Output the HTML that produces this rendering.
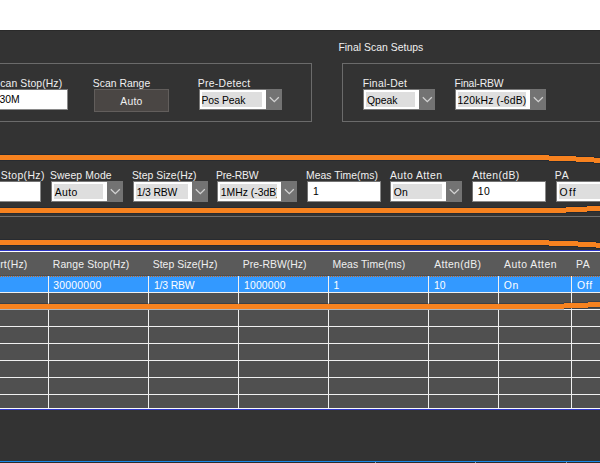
<!DOCTYPE html><html><head><meta charset="utf-8"><style>
html,body{margin:0;padding:0;width:600px;height:463px;overflow:hidden;background:#333333}
body{position:relative;font-family:"Liberation Sans",sans-serif;font-size:10.4px}
.t{position:absolute;white-space:nowrap;line-height:12px;height:12px}
.r{position:absolute}
</style></head><body>
<div class="r" style="left:0px;top:0px;width:600px;height:30px;background:#ffffff;"></div>
<div class="r" style="left:0px;top:30px;width:600px;height:1px;background:#2a2a2a;"></div>
<div class="r" style="left:-10px;top:63px;width:320px;height:57px;border:1px solid #6b6b6b"></div>
<div class="r" style="left:342px;top:63px;width:300px;height:57px;border:1px solid #6b6b6b"></div>
<div class="r" style="left:-10px;top:89px;width:76px;height:19px;background:#fff;border:1px solid #727272;border-right-color:#8a8a8a;border-bottom-color:#8a8a8a"></div>
<div class="r" style="left:94px;top:89px;width:73px;height:21px;background:#4a4644;border:1px solid #625e5c"></div>
<div class="r" style="left:199px;top:89px;width:81px;height:19px;background:#fff;border:1px solid #7a7a7a"></div>
<div class="r" style="left:202px;top:92px;width:60px;height:15px;background:#dedede;"></div>
<div class="r" style="left:266px;top:89px;width:16px;height:21px;background:#737373"><svg width="16" height="21" viewBox="0 0 16 21" style="position:absolute;left:0;top:0"><polyline points="3.8,8.2 8.3,12.7 12.8,8.2" fill="none" stroke="#d2d2d2" stroke-width="1.3"/></svg></div>
<div class="r" style="left:363px;top:89px;width:70px;height:19px;background:#fff;border:1px solid #7a7a7a"></div>
<div class="r" style="left:366px;top:92px;width:49px;height:15px;background:#dedede;"></div>
<div class="r" style="left:419px;top:89px;width:16px;height:21px;background:#737373"><svg width="16" height="21" viewBox="0 0 16 21" style="position:absolute;left:0;top:0"><polyline points="3.8,8.2 8.3,12.7 12.8,8.2" fill="none" stroke="#d2d2d2" stroke-width="1.3"/></svg></div>
<div class="r" style="left:455px;top:89px;width:89px;height:19px;background:#fff;border:1px solid #7a7a7a"></div>
<div class="r" style="left:458px;top:92px;width:68px;height:15px;background:#dedede;"></div>
<div class="r" style="left:530px;top:89px;width:16px;height:21px;background:#737373"><svg width="16" height="21" viewBox="0 0 16 21" style="position:absolute;left:0;top:0"><polyline points="3.8,8.2 8.3,12.7 12.8,8.2" fill="none" stroke="#d2d2d2" stroke-width="1.3"/></svg></div>
<div class="r" style="left:-30px;top:181px;width:69px;height:19px;background:#fff;border:1px solid #727272;border-right-color:#8a8a8a;border-bottom-color:#8a8a8a"></div>
<div class="r" style="left:51px;top:181px;width:70px;height:19px;background:#fff;border:1px solid #7a7a7a"></div>
<div class="r" style="left:54px;top:184px;width:49px;height:15px;background:#dedede;"></div>
<div class="r" style="left:107px;top:181px;width:16px;height:21px;background:#737373"><svg width="16" height="21" viewBox="0 0 16 21" style="position:absolute;left:0;top:0"><polyline points="3.8,8.2 8.3,12.7 12.8,8.2" fill="none" stroke="#d2d2d2" stroke-width="1.3"/></svg></div>
<div class="r" style="left:133px;top:181px;width:73px;height:19px;background:#fff;border:1px solid #7a7a7a"></div>
<div class="r" style="left:136px;top:184px;width:52px;height:15px;background:#dedede;"></div>
<div class="r" style="left:192px;top:181px;width:16px;height:21px;background:#737373"><svg width="16" height="21" viewBox="0 0 16 21" style="position:absolute;left:0;top:0"><polyline points="3.8,8.2 8.3,12.7 12.8,8.2" fill="none" stroke="#d2d2d2" stroke-width="1.3"/></svg></div>
<div class="r" style="left:217px;top:181px;width:78px;height:19px;background:#fff;border:1px solid #7a7a7a"></div>
<div class="r" style="left:220px;top:184px;width:57px;height:15px;background:#dedede;"></div>
<div class="r" style="left:281px;top:181px;width:16px;height:21px;background:#737373"><svg width="16" height="21" viewBox="0 0 16 21" style="position:absolute;left:0;top:0"><polyline points="3.8,8.2 8.3,12.7 12.8,8.2" fill="none" stroke="#d2d2d2" stroke-width="1.3"/></svg></div>
<div class="r" style="left:307px;top:181px;width:72px;height:19px;background:#fff;border:1px solid #727272;border-right-color:#8a8a8a;border-bottom-color:#8a8a8a"></div>
<div class="r" style="left:390px;top:181px;width:70px;height:19px;background:#fff;border:1px solid #7a7a7a"></div>
<div class="r" style="left:393px;top:184px;width:49px;height:15px;background:#dedede;"></div>
<div class="r" style="left:446px;top:181px;width:16px;height:21px;background:#737373"><svg width="16" height="21" viewBox="0 0 16 21" style="position:absolute;left:0;top:0"><polyline points="3.8,8.2 8.3,12.7 12.8,8.2" fill="none" stroke="#d2d2d2" stroke-width="1.3"/></svg></div>
<div class="r" style="left:472px;top:181px;width:72px;height:19px;background:#fff;border:1px solid #727272;border-right-color:#8a8a8a;border-bottom-color:#8a8a8a"></div>
<div class="r" style="left:556px;top:181px;width:88px;height:19px;background:#fff;border:1px solid #7a7a7a"></div>
<div class="r" style="left:559px;top:184px;width:67px;height:15px;background:#dedede;"></div>
<div class="r" style="left:630px;top:181px;width:16px;height:21px;background:#737373"><svg width="16" height="21" viewBox="0 0 16 21" style="position:absolute;left:0;top:0"><polyline points="3.8,8.2 8.3,12.7 12.8,8.2" fill="none" stroke="#d2d2d2" stroke-width="1.3"/></svg></div>
<div class="r" style="left:0px;top:216px;width:600px;height:1px;background:#6e6e6e;"></div>
<div class="r" style="left:0px;top:250px;width:600px;height:1px;background:#3038cc;"></div>
<div class="r" style="left:0px;top:251px;width:600px;height:1px;background:#ffffff;"></div>
<div class="r" style="left:0px;top:252px;width:600px;height:23px;background:#5a5a5a;"></div>
<div class="r" style="left:0px;top:275px;width:600px;height:1px;background:#4f4f4f;"></div>
<div class="r" style="left:0px;top:276px;width:600px;height:16px;background:#3399ff;"></div>
<div class="r" style="left:0;top:276px;width:600px;height:1px;background:repeating-linear-gradient(90deg,#c8661a 0 1px,#3399ff 1px 2px)"></div>
<div class="r" style="left:0px;top:292px;width:600px;height:1px;background:#f0f0f0;"></div>
<div class="r" style="left:0px;top:293px;width:600px;height:16px;background:#505050;"></div>
<div class="r" style="left:0px;top:309px;width:600px;height:1px;background:#f0f0f0;"></div>
<div class="r" style="left:0px;top:310px;width:600px;height:16px;background:#505050;"></div>
<div class="r" style="left:0px;top:326px;width:600px;height:1px;background:#f0f0f0;"></div>
<div class="r" style="left:0px;top:327px;width:600px;height:16px;background:#505050;"></div>
<div class="r" style="left:0px;top:343px;width:600px;height:1px;background:#f0f0f0;"></div>
<div class="r" style="left:0px;top:344px;width:600px;height:16px;background:#505050;"></div>
<div class="r" style="left:0px;top:360px;width:600px;height:1px;background:#f0f0f0;"></div>
<div class="r" style="left:0px;top:361px;width:600px;height:16px;background:#505050;"></div>
<div class="r" style="left:0px;top:377px;width:600px;height:1px;background:#f0f0f0;"></div>
<div class="r" style="left:0px;top:378px;width:600px;height:16px;background:#505050;"></div>
<div class="r" style="left:0px;top:394px;width:600px;height:1px;background:#f0f0f0;"></div>
<div class="r" style="left:0px;top:395px;width:600px;height:13px;background:#505050;"></div>
<div class="r" style="left:0px;top:408px;width:600px;height:1px;background:#fafafa;"></div>
<div class="r" style="left:0px;top:409px;width:600px;height:1px;background:#3038cc;"></div>
<div class="r" style="left:48px;top:276px;width:1px;height:132px;background:#f0f0f0;"></div>
<div class="r" style="left:148px;top:276px;width:1px;height:132px;background:#f0f0f0;"></div>
<div class="r" style="left:238px;top:276px;width:1px;height:132px;background:#f0f0f0;"></div>
<div class="r" style="left:328px;top:276px;width:1px;height:132px;background:#f0f0f0;"></div>
<div class="r" style="left:428px;top:276px;width:1px;height:132px;background:#f0f0f0;"></div>
<div class="r" style="left:498px;top:276px;width:1px;height:132px;background:#f0f0f0;"></div>
<div class="r" style="left:571px;top:276px;width:1px;height:132px;background:#f0f0f0;"></div>
<div class="r" style="left:0px;top:461px;width:600px;height:1px;background:#1a88e8;"></div>
<div class="r" style="left:0px;top:462px;width:600px;height:1px;background:#2c2c2c;"></div>
<div class="r" style="left:375px;top:462px;width:1px;height:1px;background:#9a9a9a;"></div>
<div class="r" style="left:475px;top:462px;width:1px;height:1px;background:#9a9a9a;"></div>
<div class="r" style="left:566px;top:462px;width:1px;height:1px;background:#9a9a9a;"></div>
<div class="r" style="left:0px;top:154px;width:549px;height:1px;background:rgba(10,25,45,0.28);"></div>
<div class="r" style="left:0px;top:155px;width:549px;height:5px;background:#f7821f;"></div>
<div class="r" style="left:0px;top:160px;width:549px;height:1px;background:rgba(10,25,45,0.28);"></div>
<div class="r" style="left:549px;top:155px;width:27px;height:1px;background:rgba(10,25,45,0.28);"></div>
<div class="r" style="left:549px;top:156px;width:27px;height:5px;background:#f7821f;"></div>
<div class="r" style="left:549px;top:161px;width:27px;height:1px;background:rgba(10,25,45,0.28);"></div>
<div class="r" style="left:576px;top:156px;width:18px;height:1px;background:rgba(10,25,45,0.28);"></div>
<div class="r" style="left:576px;top:157px;width:18px;height:5px;background:#f7821f;"></div>
<div class="r" style="left:576px;top:162px;width:18px;height:1px;background:rgba(10,25,45,0.28);"></div>
<div class="r" style="left:594px;top:157px;width:6px;height:1px;background:rgba(10,25,45,0.28);"></div>
<div class="r" style="left:594px;top:158px;width:6px;height:5px;background:#f7821f;"></div>
<div class="r" style="left:594px;top:163px;width:6px;height:1px;background:rgba(10,25,45,0.28);"></div>
<div class="r" style="left:0px;top:207px;width:566px;height:1px;background:rgba(10,25,45,0.28);"></div>
<div class="r" style="left:0px;top:208px;width:566px;height:5px;background:#f7821f;"></div>
<div class="r" style="left:0px;top:213px;width:566px;height:1px;background:rgba(10,25,45,0.28);"></div>
<div class="r" style="left:566px;top:206px;width:21px;height:1px;background:rgba(10,25,45,0.28);"></div>
<div class="r" style="left:566px;top:207px;width:21px;height:5px;background:#f7821f;"></div>
<div class="r" style="left:566px;top:212px;width:21px;height:1px;background:rgba(10,25,45,0.28);"></div>
<div class="r" style="left:587px;top:205px;width:13px;height:1px;background:rgba(10,25,45,0.28);"></div>
<div class="r" style="left:587px;top:206px;width:13px;height:5px;background:#f7821f;"></div>
<div class="r" style="left:587px;top:211px;width:13px;height:1px;background:rgba(10,25,45,0.28);"></div>
<div class="r" style="left:0px;top:239px;width:549px;height:1px;background:rgba(10,25,45,0.28);"></div>
<div class="r" style="left:0px;top:240px;width:549px;height:5px;background:#f7821f;"></div>
<div class="r" style="left:0px;top:245px;width:549px;height:1px;background:rgba(10,25,45,0.28);"></div>
<div class="r" style="left:549px;top:240px;width:29px;height:1px;background:rgba(10,25,45,0.28);"></div>
<div class="r" style="left:549px;top:241px;width:29px;height:5px;background:#f7821f;"></div>
<div class="r" style="left:549px;top:246px;width:29px;height:1px;background:rgba(10,25,45,0.28);"></div>
<div class="r" style="left:578px;top:241px;width:18px;height:1px;background:rgba(10,25,45,0.28);"></div>
<div class="r" style="left:578px;top:242px;width:18px;height:5px;background:#f7821f;"></div>
<div class="r" style="left:578px;top:247px;width:18px;height:1px;background:rgba(10,25,45,0.28);"></div>
<div class="r" style="left:596px;top:242px;width:4px;height:1px;background:rgba(10,25,45,0.28);"></div>
<div class="r" style="left:596px;top:243px;width:4px;height:5px;background:#f7821f;"></div>
<div class="r" style="left:596px;top:248px;width:4px;height:1px;background:rgba(10,25,45,0.28);"></div>
<div class="r" style="left:0px;top:303px;width:564px;height:1px;background:rgba(10,25,45,0.28);"></div>
<div class="r" style="left:0px;top:304px;width:564px;height:5px;background:#f7821f;"></div>
<div class="r" style="left:0px;top:309px;width:564px;height:1px;background:rgba(10,25,45,0.28);"></div>
<div class="r" style="left:564px;top:302px;width:24px;height:1px;background:rgba(10,25,45,0.28);"></div>
<div class="r" style="left:564px;top:303px;width:24px;height:5px;background:#f7821f;"></div>
<div class="r" style="left:564px;top:308px;width:24px;height:1px;background:rgba(10,25,45,0.28);"></div>
<div class="r" style="left:588px;top:301px;width:12px;height:1px;background:rgba(10,25,45,0.28);"></div>
<div class="r" style="left:588px;top:302px;width:12px;height:5px;background:#f7821f;"></div>
<div class="r" style="left:588px;top:307px;width:12px;height:1px;background:rgba(10,25,45,0.28);"></div>
<div class="t" style="left:338.4px;top:42px;color:#f0f0f0;letter-spacing:0.031px;">Final Scan Setups</div>
<div class="t" style="left:0.3px;top:78px;color:#f0f0f0;letter-spacing:0.109px;">can Stop(Hz)</div>
<div class="t" style="left:92.7px;top:78px;color:#f0f0f0;letter-spacing:0.033px;">Scan Range</div>
<div class="t" style="left:197.75px;top:78px;color:#f0f0f0;letter-spacing:0.306px;">Pre-Detect</div>
<div class="t" style="left:362.7px;top:78px;color:#f0f0f0;letter-spacing:0.256px;">Final-Det</div>
<div class="t" style="left:454.6px;top:78px;color:#f0f0f0;letter-spacing:-0.15px;">Final-RBW</div>
<div class="t" style="left:-0.6px;top:94px;color:#000000;">30M</div>
<div class="t" style="left:120.25px;top:96px;color:#f0f0f0;letter-spacing:0.25px;">Auto</div>
<div class="t" style="left:201.5px;top:95px;color:#000000;letter-spacing:-0.071px;">Pos Peak</div>
<div class="t" style="left:367.0px;top:95px;color:#000000;letter-spacing:-0.062px;">Qpeak</div>
<div class="t" style="left:457.4px;top:95px;color:#000000;letter-spacing:0.154px;">120kHz (-6dB)</div>
<div class="t" style="left:0.7px;top:170px;color:#f0f0f0;letter-spacing:0.386px;">Stop(Hz)</div>
<div class="t" style="left:49.9px;top:170px;color:#f0f0f0;letter-spacing:0.122px;">Sweep Mode</div>
<div class="t" style="left:131.9px;top:170px;color:#f0f0f0;letter-spacing:0.033px;">Step Size(Hz)</div>
<div class="t" style="left:215.9px;top:170px;color:#f0f0f0;letter-spacing:-0.183px;">Pre-RBW</div>
<div class="t" style="left:306.0px;top:170px;color:#f0f0f0;letter-spacing:0.025px;">Meas Time(ms)</div>
<div class="t" style="left:390.0px;top:170px;color:#f0f0f0;letter-spacing:0.444px;">Auto Atten</div>
<div class="t" style="left:472.2px;top:170px;color:#f0f0f0;letter-spacing:0.387px;">Atten(dB)</div>
<div class="t" style="left:554.8px;top:170px;color:#f0f0f0;letter-spacing:0.7px;">PA</div>
<div class="t" style="left:54.7px;top:187px;color:#000000;letter-spacing:0.433px;">Auto</div>
<div class="t" style="left:136.7px;top:187px;color:#000000;letter-spacing:-0.15px;">1/3 RBW</div>
<div class="t" style="left:220.8px;top:187px;color:#000000;width:56px;overflow:hidden;">1MHz (-3dB)</div>
<div class="t" style="left:313.0px;top:186px;color:#000000;">1</div>
<div class="t" style="left:393.7px;top:187px;color:#000000;letter-spacing:0.3px;">On</div>
<div class="t" style="left:477.8px;top:186px;color:#000000;letter-spacing:0.4px;">10</div>
<div class="t" style="left:559.6px;top:187px;color:#000000;letter-spacing:1.2px;">Off</div>
<div class="t" style="left:0.2px;top:259px;color:#f0f0f0;letter-spacing:0.22px;">rt(Hz)</div>
<div class="t" style="left:52.75px;top:259px;color:#f0f0f0;letter-spacing:0.154px;">Range Stop(Hz)</div>
<div class="t" style="left:152.7px;top:259px;color:#f0f0f0;letter-spacing:0.05px;">Step Size(Hz)</div>
<div class="t" style="left:242.7px;top:259px;color:#f0f0f0;letter-spacing:0.03px;">Pre-RBW(Hz)</div>
<div class="t" style="left:332.4px;top:259px;color:#f0f0f0;letter-spacing:0.108px;">Meas Time(ms)</div>
<div class="t" style="left:434.2px;top:259px;color:#f0f0f0;letter-spacing:0.35px;">Atten(dB)</div>
<div class="t" style="left:504.1px;top:259px;color:#f0f0f0;letter-spacing:0.5px;">Auto Atten</div>
<div class="t" style="left:575.9px;top:259px;color:#f0f0f0;letter-spacing:0.6px;">PA</div>
<div class="t" style="left:53.2px;top:280px;color:#ffffff;letter-spacing:0.257px;">30000000</div>
<div class="t" style="left:154.0px;top:280px;color:#ffffff;letter-spacing:-0.167px;">1/3 RBW</div>
<div class="t" style="left:244.0px;top:280px;color:#ffffff;letter-spacing:0.167px;">1000000</div>
<div class="t" style="left:333.5px;top:280px;color:#ffffff;">1</div>
<div class="t" style="left:434.0px;top:280px;color:#ffffff;">10</div>
<div class="t" style="left:503.75px;top:280px;color:#ffffff;letter-spacing:0.65px;">On</div>
<div class="t" style="left:576.9px;top:280px;color:#ffffff;letter-spacing:0.85px;">Off</div>
</body></html>
